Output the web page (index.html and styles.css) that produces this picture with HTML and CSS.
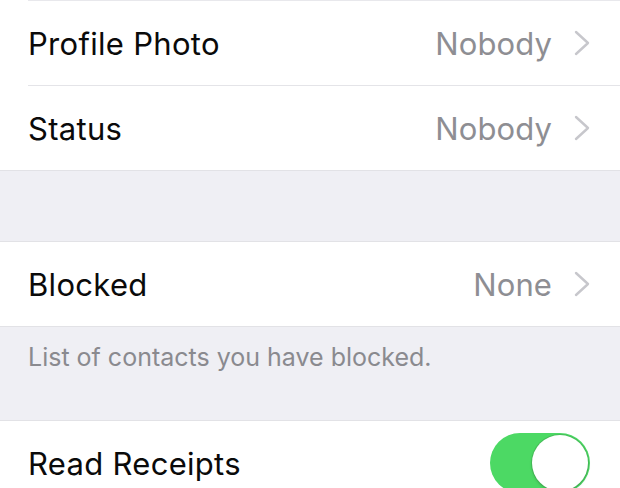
FILE: index.html
```html
<!DOCTYPE html>
<html>
<head>
<meta charset="utf-8">
<link rel="stylesheet" href="styles.css">
</head>
<body>
<div class="group top">
  <div class="row">
    <span class="label">Profile Photo</span>
    <span class="value">Nobody</span>
    <svg class="chev" width="16" height="26" viewBox="0 0 16 26"><path d="M2 2 L14 13 L2 24" fill="none" stroke="#c7c7cc" stroke-width="2.4" stroke-linecap="round" stroke-linejoin="round"/></svg>
  </div>
  <div class="row">
    <span class="label">Status</span>
    <span class="value">Nobody</span>
    <svg class="chev" width="16" height="26" viewBox="0 0 16 26"><path d="M2 2 L14 13 L2 24" fill="none" stroke="#c7c7cc" stroke-width="2.4" stroke-linecap="round" stroke-linejoin="round"/></svg>
  </div>
</div>
<div class="spacer"></div>
<div class="group">
  <div class="row">
    <span class="label">Blocked</span>
    <span class="value">None</span>
    <svg class="chev" width="16" height="26" viewBox="0 0 16 26"><path d="M2 2 L14 13 L2 24" fill="none" stroke="#c7c7cc" stroke-width="2.4" stroke-linecap="round" stroke-linejoin="round"/></svg>
  </div>
</div>
<div class="footer">List of contacts you have blocked.</div>
<div class="group">
  <div class="row toggle-row">
    <span class="label">Read Receipts</span>
    <span class="toggle"><span class="knob"></span></span>
  </div>
</div>
</body>
</html>
```
FILE: styles.css
```css
html, body {
  margin: 0;
  padding: 0;
}
body {
  background: #efeff4;
  font-family: Inter, "Liberation Sans", sans-serif;
  width: 620px;
  height: 488px;
  overflow: hidden;
}
.group {
  background: #fff;
  border-top: 1px solid #e2e2e6;
  border-bottom: 1px solid #e2e2e6;
}
.group.top {
  border-top: none;
}
.row {
  display: flex;
  align-items: center;
  height: 84px;
  margin-left: 28px;
  padding-right: 30px;
  border-top: 1px solid #e4e4e8;
}
.group .row:first-child {
  border-top: none;
}
.group.top .row:first-child {
  border-top: 1px solid #e8e8ec;
}
.label {
  flex: 1;
  font-size: 31px;
  color: #0a0a0a;
  letter-spacing: 0.3px;
}
.value {
  font-size: 31px;
  color: #8e8e93;
  margin-right: 22px;
  letter-spacing: 0.1px;
}
.chev {
  display: block;
}
.spacer {
  height: 70px;
}
.footer {
  height: 93px;
  box-sizing: border-box;
  padding: 15px 0 0 28px;
  font-size: 25px;
  color: #8a8a8f;
}
.toggle {
  width: 100px;
  height: 60px;
  border-radius: 30px;
  background: #4cd964;
  display: flex;
  align-items: center;
  justify-content: flex-end;
  padding: 2px;
  box-sizing: border-box;
}
.knob {
  width: 56px;
  height: 56px;
  border-radius: 50%;
  background: #fff;
  box-shadow: 0 0 0 1px rgba(60, 140, 70, 0.35), 0 2px 3px rgba(0, 0, 0, 0.15);
}
```
